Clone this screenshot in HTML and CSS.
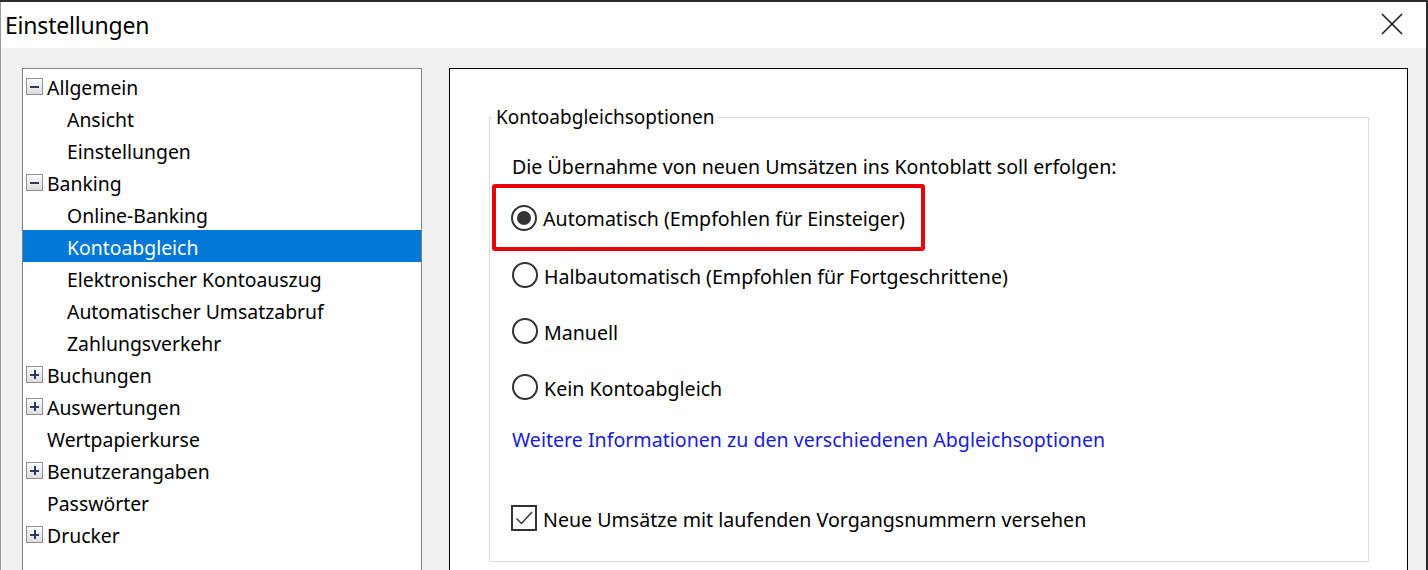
FILE: index.html
```html
<!DOCTYPE html>
<html lang="de">
<head>
<meta charset="utf-8">
<title>Einstellungen</title>
<link rel="stylesheet" href="styles.css">
</head>
<body>
<div class="window">
  <div class="titlebar">
    <span class="title">Einstellungen</span>
    <span class="close" aria-label="Schließen">
      <svg width="22" height="22" viewBox="0 0 22 22"><path d="M1 1 L21 21 M21 1 L1 21" stroke="#1a1a1a" stroke-width="1.6" fill="none"/></svg>
    </span>
  </div>
  <div class="content">
    <div class="tree">
      <div class="node top"><span class="exp minus"></span><span class="lbl">Allgemein</span></div>
      <div class="node child"><span class="lbl">Ansicht</span></div>
      <div class="node child"><span class="lbl">Einstellungen</span></div>
      <div class="node top"><span class="exp minus"></span><span class="lbl">Banking</span></div>
      <div class="node child"><span class="lbl">Online-Banking</span></div>
      <div class="node child selected"><span class="lbl">Kontoabgleich</span></div>
      <div class="node child"><span class="lbl">Elektronischer Kontoauszug</span></div>
      <div class="node child"><span class="lbl">Automatischer Umsatzabruf</span></div>
      <div class="node child"><span class="lbl">Zahlungsverkehr</span></div>
      <div class="node top"><span class="exp plus"></span><span class="lbl">Buchungen</span></div>
      <div class="node top"><span class="exp plus"></span><span class="lbl">Auswertungen</span></div>
      <div class="node top"><span class="noexp"></span><span class="lbl">Wertpapierkurse</span></div>
      <div class="node top"><span class="exp plus"></span><span class="lbl">Benutzerangaben</span></div>
      <div class="node top"><span class="noexp"></span><span class="lbl">Passwörter</span></div>
      <div class="node top"><span class="exp plus"></span><span class="lbl">Drucker</span></div>
    </div>
    <div class="panel">
      <fieldset class="group">
        <legend>Kontoabgleichsoptionen</legend>
        <div class="intro">Die Übernahme von neuen Umsätzen ins Kontoblatt soll erfolgen:</div>
        <div class="mark">
          <div class="opt"><span class="radio on"></span><span class="lbl">Automatisch (Empfohlen für Einsteiger)</span></div>
        </div>
        <div class="opt r2"><span class="radio"></span><span class="lbl">Halbautomatisch (Empfohlen für Fortgeschrittene)</span></div>
        <div class="opt r3"><span class="radio"></span><span class="lbl">Manuell</span></div>
        <div class="opt r3"><span class="radio"></span><span class="lbl">Kein Kontoabgleich</span></div>
        <div class="link">Weitere Informationen zu den verschiedenen Abgleichsoptionen</div>
        <div class="opt chk"><span class="check"><svg width="22" height="22" viewBox="0 0 22 22"><path d="M3.5 11.5 L8.5 16.5 L19 5" stroke="#333" stroke-width="1.4" fill="none"/></svg></span><span class="lbl">Neue Umsätze mit laufenden Vorgangsnummern versehen</span></div>
      </fieldset>
    </div>
  </div>
</div>
</body>
</html>
```

FILE: styles.css
```css
html, body {
  margin: 0;
  padding: 0;
  width: 1428px;
  height: 570px;
  overflow: hidden;
  background: #2b2b2b;
}
body {
  font-family: "Noto Sans", "Open Sans", sans-serif;
  color: #000;
}
.window {
  margin-top: 2px;
  margin-right: 2px;
  height: 568px;
  background: #f0f0f0;
  display: flex;
  flex-direction: column;
  border-left: 1px solid #9a9a9a;
  box-sizing: border-box;
}
.titlebar {
  height: 46px;
  flex: none;
  background: #fff;
  display: flex;
  align-items: center;
  justify-content: space-between;
  padding-left: 4px;
  padding-right: 23px;
}
.title {
  font-size: 23px;
  letter-spacing: -0.2px;
  margin-top: -1px;
}
.close {
  display: flex;
  margin-top: -2px;
}
.content {
  flex: 1;
  display: flex;
  padding: 20px 18px 0 21px;
  gap: 27px;
  min-height: 0;
}
.tree {
  width: 400px;
  flex: none;
  box-sizing: border-box;
  border: 1px solid #828282;
  border-bottom: none;
  background: #fff;
  padding-top: 1px;
  font-size: 19.4px;
}
.node {
  height: 32px;
  display: flex;
  align-items: center;
  white-space: nowrap;
}
.lbl {
  position: relative;
  top: 1px;
}
.node.top {
  padding-left: 3px;
}
.node.child {
  padding-left: 44px;
}
.node.selected {
  background: #0078d7;
  color: #fff;
}
.exp, .noexp {
  width: 17px;
  height: 17px;
  box-sizing: border-box;
  margin-right: 4px;
  flex: none;
  position: relative;
}
.exp {
  border: 1px solid #8f8f9a;
  background: linear-gradient(#fdfdfd, #dcdcdc);
}
.exp::before {
  content: "";
  position: absolute;
  left: 3px;
  top: 7px;
  width: 9px;
  height: 2px;
  background: #2c3a66;
}
.plus::after {
  content: "";
  position: absolute;
  left: 7px;
  top: 3px;
  width: 2px;
  height: 9px;
  background: #2c3a66;
}
.panel {
  flex: 1;
  box-sizing: border-box;
  border: 1px solid #000;
  border-bottom: none;
  background: #fff;
  padding: 36px 38px 0 39px;
}
.group {
  margin: 0;
  border: 1px solid #dcdcdc;
  padding: 0 0 0 22px;
  height: 457px;
  box-sizing: border-box;
  font-size: 19.6px;
}
.group legend {
  padding: 0 3px;
  margin-left: -19px;
  line-height: 24px;
  font-size: 19px;
}
.intro {
  margin-top: 23px;
  height: 30px;
  line-height: 30px;
}
.mark {
  margin-top: 2px;
  margin-left: -20px;
  width: 433px;
  height: 67px;
  box-sizing: border-box;
  border: 4px solid #e8050a;
  border-radius: 3px;
  padding-left: 15px;
  display: flex;
  align-items: center;
}
.opt {
  height: 28px;
  display: flex;
  align-items: center;
  white-space: nowrap;
}
.r2 {
  margin-top: 10px;
}
.r3 {
  margin-top: 28px;
}
.radio {
  width: 26px;
  height: 26px;
  box-sizing: border-box;
  border: 2px solid #333;
  border-radius: 50%;
  margin-right: 6px;
  display: flex;
  align-items: center;
  justify-content: center;
  flex: none;
}
.radio.on::after {
  content: "";
  width: 14px;
  height: 14px;
  border-radius: 50%;
  background: #333;
}
.link {
  margin-top: 25px;
  height: 28px;
  line-height: 28px;
  color: #1a1ae0;
}
.chk {
  margin-top: 50px;
}
.check {
  width: 26px;
  height: 26px;
  box-sizing: border-box;
  border: 2px solid #333;
  margin-left: -1px;
  margin-right: 6px;
  display: flex;
  align-items: center;
  justify-content: center;
  flex: none;
}
```
